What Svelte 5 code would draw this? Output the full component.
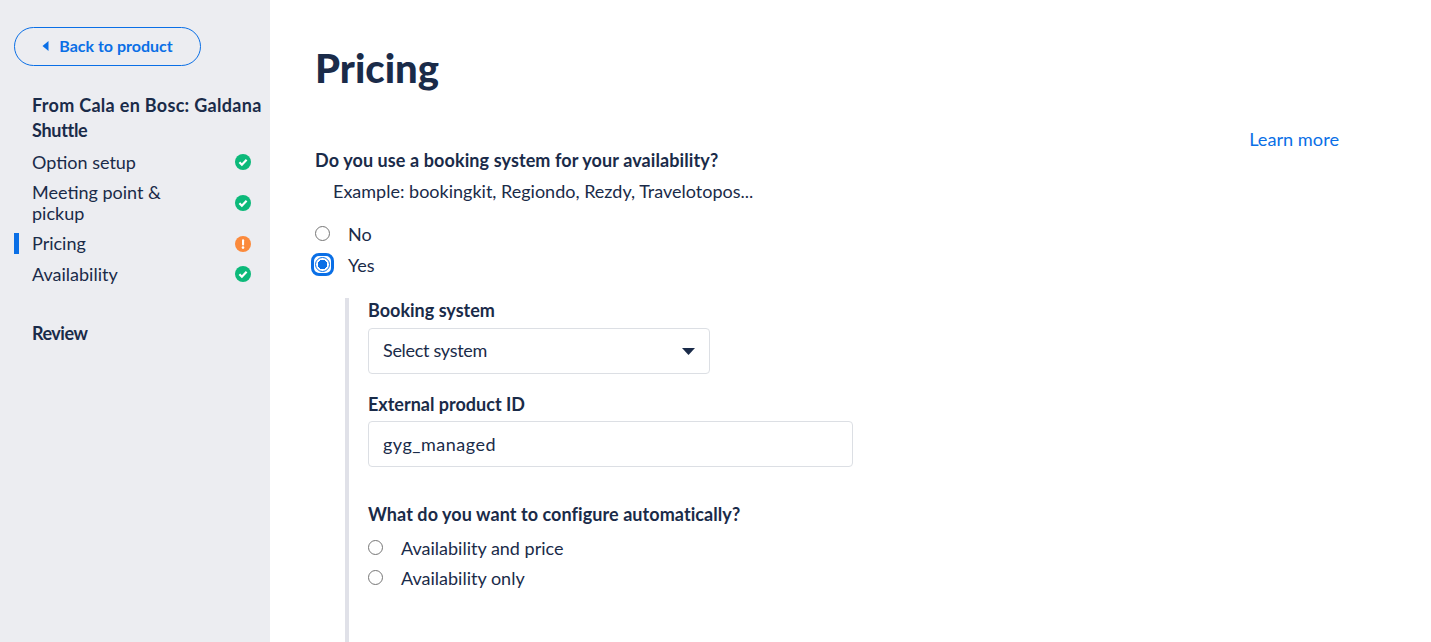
<script lang="ts">
    const steps = [
        { label: "Option setup", status: "ok" },
        { label: "Meeting point & pickup", status: "ok" },
        { label: "Pricing", status: "warn", active: true },
        { label: "Availability", status: "ok" },
    ];
</script>

<div class="page">
    <aside class="sidebar">
        <button class="back">
            <svg width="7" height="10" viewBox="0 0 7 10"><path d="M6.5 0v10L0.5 5z" fill="currentColor" /></svg>
            Back to product
        </button>
        <div class="option-title">From Cala en Bosc: Galdana <span class="tight">Shuttle</span></div>
        <ul class="steps">
            {#each steps as step}
                <li class="step" class:active={step.active}>
                    <span class="step-label">{step.label}</span>
                    {#if step.status === "ok"}
                        <svg class="status" width="16" height="16" viewBox="0 0 16 16">
                            <circle cx="8" cy="8" r="8" fill="#0cb97a" />
                            <path d="M4.4 8.2l2.5 2.5 4.7-4.9" fill="none" stroke="#fff" stroke-width="2.2" />
                        </svg>
                    {:else}
                        <svg class="status" width="16" height="16" viewBox="0 0 16 16">
                            <circle cx="8" cy="8" r="8" fill="#fb8a3c" />
                            <rect x="7" y="3.2" width="2.1" height="6.2" rx="1" fill="#fff" />
                            <circle cx="8" cy="11.6" r="1.3" fill="#fff" />
                        </svg>
                    {/if}
                </li>
            {/each}
        </ul>
        <div class="review">Review</div>
    </aside>

    <main class="content">
        <h1>Pricing</h1>
        <div class="learn-row"><a href="#learn">Learn more</a></div>
        <div class="question">Do you use a booking system for your availability?</div>
        <div class="example">Example: bookingkit, Regiondo, Rezdy, Travelotopos...</div>

        <div class="radios">
            <label class="radio"><span class="dot"></span>No</label>
            <label class="radio"><span class="dot checked"></span>Yes</label>
        </div>

        <section class="nested">
            <div class="field-label">Booking system</div>
            <div class="select">
                <span>Select system</span>
                <svg width="13" height="7" viewBox="0 0 13 7"><path d="M0 0h13L6.5 7z" fill="#1a2b49" /></svg>
            </div>
            <div class="field-label second">External product ID</div>
            <div class="input">gyg_managed</div>
            <div class="field-label third">What do you want to configure automatically?</div>
            <div class="radios inner">
                <label class="radio"><span class="dot"></span>Availability and price</label>
                <label class="radio"><span class="dot"></span>Availability only</label>
            </div>
        </section>
    </main>
</div>

<style>
    :global(body) {
        margin: 0;
        background: #fff;
    }

    .page {
        display: flex;
        height: 642px;
        overflow: hidden;
        font-family: Lato, "Open Sans", sans-serif;
        font-size: 18px;
        color: #1a2b49;
    }

    .sidebar {
        width: 270px;
        flex-shrink: 0;
        box-sizing: border-box;
        padding: 27px 0 0 14px;
        background: #ecedf1;
    }

    .back {
        display: flex;
        align-items: center;
        justify-content: center;
        gap: 10px;
        width: 187px;
        height: 39px;
        padding: 0 0 2px;
        border: 1.5px solid #0a6fe6;
        border-radius: 20px;
        background: transparent;
        color: #0a6fe6;
        font: inherit;
        font-size: 16px;
        font-weight: 700;
    }

    .option-title {
        margin: 27px 0 0 18px;
        font-weight: 700;
        line-height: 25px;
        letter-spacing: 0.3px;
    }

    .tight {
        letter-spacing: -0.3px;
    }

    .steps {
        list-style: none;
        margin: 8.5px 0 0;
        padding: 0;
    }

    .step {
        display: flex;
        align-items: center;
        justify-content: space-between;
        box-sizing: border-box;
        width: 237px;
        min-height: 21px;
        margin-bottom: 9.4px;
        padding-left: 18px;
        line-height: 21px;
        border-left: 0 solid transparent;
    }

    .step.active {
        padding-left: 13px;
        border-left: 5px solid #0a6fe6;
    }

    .step-label {
        width: 140px;
    }

    .status {
        flex-shrink: 0;
    }

    .review {
        margin: 37.5px 0 0 18px;
        font-weight: 700;
        letter-spacing: -0.5px;
    }

    .content {
        flex: 1;
        padding: 0 92px 0 45px;
    }

    h1 {
        margin: 43px 0 0;
        font-size: 40px;
        line-height: 50px;
        font-weight: 900;
    }

    .learn-row {
        display: flex;
        justify-content: flex-end;
        margin-top: 33px;
        line-height: 26px;
    }

    .learn-row a {
        color: #0a6fe6;
        font-size: 18.2px;
        text-decoration: none;
    }

    .question {
        margin-top: -4px;
        font-weight: 700;
        line-height: 24px;
        letter-spacing: 0.1px;
    }

    .example {
        margin: 7px 0 0 18px;
        line-height: 24px;
    }

    .radios {
        display: flex;
        flex-direction: column;
        gap: 10px;
        margin-top: 21px;
    }

    .radio {
        display: flex;
        align-items: center;
        height: 21px;
        line-height: 21px;
    }

    .dot {
        position: relative;
        box-sizing: border-box;
        width: 15px;
        height: 15px;
        margin: -2px 18px 0 0;
        border: 1px solid #767676;
        border-radius: 50%;
        background: #fff;
    }

    .dot.checked {
        border-color: #0a6fe6;
        background: radial-gradient(circle, #0a6fe6 0 4.5px, #fff 5px);
    }

    .dot.checked::after {
        content: "";
        position: absolute;
        inset: -5px;
        border: 3px solid #0a6fe6;
        border-radius: 8px;
    }

    .nested {
        box-sizing: border-box;
        height: 400px;
        margin: 22px 0 0 30px;
        padding: 0 0 0 19px;
        border-left: 4px solid #e0e1e8;
    }

    .field-label {
        font-weight: 700;
        line-height: 24px;
    }

    .select,
    .input {
        display: flex;
        align-items: center;
        box-sizing: border-box;
        height: 46px;
        margin-top: 6px;
        padding: 0 14px;
        border: 1px solid #dcdfe4;
        border-radius: 4px;
        background: #fff;
    }

    .select {
        justify-content: space-between;
        width: 342px;
    }

    .select span {
        margin-top: -2px;
        letter-spacing: -0.3px;
    }

    .input {
        width: 485px;
        margin-top: 5px;
        letter-spacing: 0.5px;
    }

    .second {
        margin-top: 18px;
    }

    .third {
        margin-top: 35px;
        letter-spacing: 0.07px;
    }

    .inner {
        gap: 9px;
        margin-top: 12px;
    }
</style>
